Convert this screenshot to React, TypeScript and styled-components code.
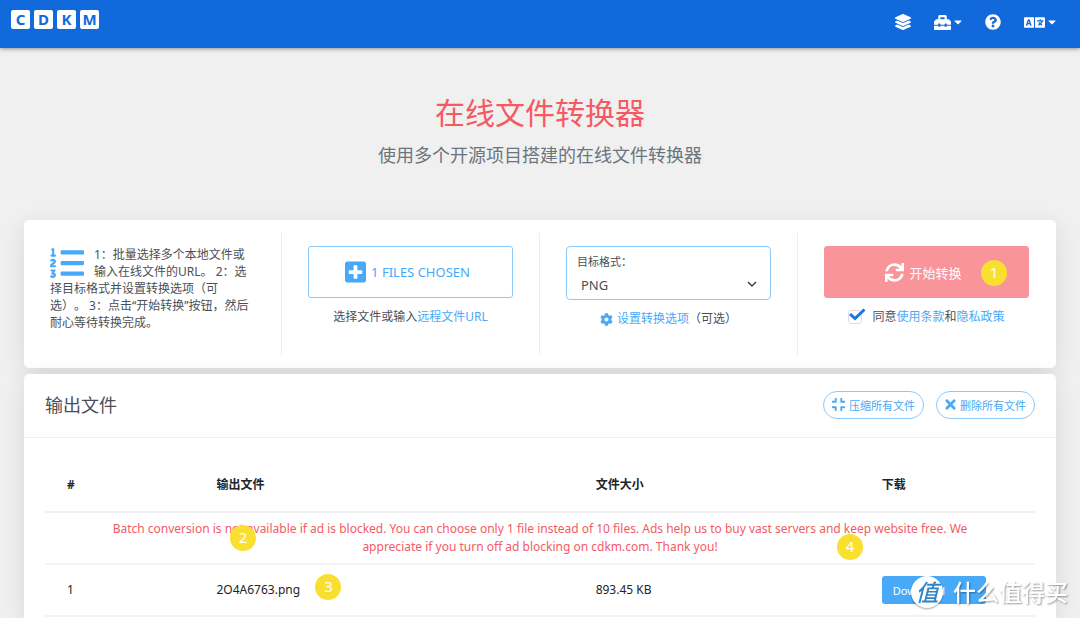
import React from "react";
import styled, { createGlobalStyle } from "styled-components";
import {
  FaCaretDown,
  FaCog,
  FaCompress,
  FaLanguage,
  FaLayerGroup,
  FaListOl,
  FaPlusSquare,
  FaQuestionCircle,
  FaSync,
  FaTimes,
  FaToolbox,
} from "react-icons/fa";

const blue = "#47a9f8";
const red = "#f55a64";

const GlobalStyle = createGlobalStyle`
  *, *::before, *::after { box-sizing: border-box; }
  body {
    margin: 0;
    background: #f0f0f0;
    color: #4a5057;
    font-family: "Noto Sans", "Noto Sans CJK SC", sans-serif;
    font-size: 12px;
    line-height: 18px;
    text-spacing-trim: space-all;
  }
  button, select, input { font-family: inherit; }
`;

const Page = styled.div`
  display: flex;
  flex-direction: column;
  min-height: 100vh;
`;

const TopBar = styled.header`
  display: flex;
  justify-content: space-between;
  align-items: flex-start;
  height: 48px;
  padding: 10px 24px 0 11px;
  background: #1269db;
  box-shadow: 0 1px 4px rgba(0, 0, 0, 0.4);
`;

const Logo = styled.a`
  display: flex;
  gap: 4px;
  text-decoration: none;
`;

const LogoTile = styled.span`
  width: 19px;
  height: 19px;
  border-radius: 2px;
  background: #fff;
  color: #1269db;
  font-size: 15px;
  font-weight: 700;
  line-height: 19px;
  text-align: center;
`;

const Nav = styled.nav`
  display: flex;
  align-items: center;
  gap: 23px;
  height: 24px;
`;

const NavButton = styled.button`
  display: flex;
  align-items: center;
  gap: 3px;
  padding: 0;
  border: 0;
  background: none;
  color: #fff;
`;

const Caret = styled(FaCaretDown)`
  width: 8px;
  height: 12px;
`;

const Hero = styled.section`
  padding: 42px 24px 50px;
  text-align: center;
`;

const Title = styled.h1`
  margin: 0;
  color: ${red};
  font-size: 30px;
  font-weight: 400;
  line-height: 46px;
`;

const Subtitle = styled.p`
  margin: 4px 0 0;
  color: #6c757d;
  font-size: 18px;
  line-height: 30px;
`;

const Main = styled.main`
  display: flex;
  flex: 1;
  flex-direction: column;
  gap: 6px;
  padding: 0 24px;
`;

const Card = styled.section<{ $grow?: boolean }>`
  flex: ${(p) => (p.$grow ? "1 0 auto" : "none")};
  border-radius: ${(p) => (p.$grow ? "5px 5px 0 0" : "5px")};
  background: #fff;
  box-shadow: 0 6px 24px rgba(0, 0, 0, 0.1);
`;

const Steps = styled.div`
  display: grid;
  grid-template-columns: repeat(4, 1fr);
  padding: 13px 0;
`;

const Step = styled.div`
  min-height: 122px;
  padding: 13px 26px 0;
  border-right: 1px solid #eee;
  text-align: center;
  &:last-child { border-right-color: transparent; }
`;

const Instructions = styled.p`
  margin: 0;
  line-height: 17px;
  text-align: left;
  white-space: nowrap;
`;

const ListIcon = styled(FaListOl)`
  float: left;
  width: 34px;
  height: 34px;
  margin-right: 10px;
  color: ${blue};
`;

const BigButton = styled.button<{ $solid?: boolean }>`
  position: relative;
  display: flex;
  align-items: center;
  justify-content: center;
  gap: 5px;
  width: 100%;
  height: 52px;
  padding: 0 6px 0 0;
  border: 1px solid ${(p) => (p.$solid ? "#f8949a" : "#8ccafb")};
  border-radius: 3px;
  background: ${(p) => (p.$solid ? "#f8949a" : "#fff")};
  color: ${(p) => (p.$solid ? "#fff" : blue)};
  font-size: 13px;
`;

const PlusIcon = styled(FaPlusSquare)`
  width: 21px;
  height: 24px;
`;

const Hint = styled.div`
  display: flex;
  align-items: center;
  justify-content: center;
  margin-top: 10px;
`;

const Link = styled.a`
  color: ${blue};
  text-decoration: none;
`;

const CogIcon = styled(FaCog)`
  margin-right: 4px;
  color: ${blue};
`;

const FormatBox = styled.div`
  position: relative;
  height: 54px;
  padding: 5px 10px;
  border: 1px solid #8ccafb;
  border-radius: 4px;
  text-align: left;
`;

const FormatLabel = styled.label`
  display: block;
  font-size: 11px;
  line-height: 20px;
`;

const FormatSelect = styled.select`
  width: 100%;
  height: 26px;
  padding: 0 4px;
  border: 0;
  appearance: none;
  background: transparent;
  color: #4a5057;
  font-size: 13px;
`;

const Chevron = styled.svg`
  position: absolute;
  right: 13px;
  bottom: 11px;
  pointer-events: none;
`;

const CheckWrap = styled.span`
  position: relative;
  display: block;
  width: 14px;
  height: 14px;
  margin-right: 10px;
`;

const CheckInput = styled.input`
  display: block;
  width: 14px;
  height: 14px;
  margin: 0;
  border: 1px solid #dcdfe3;
  border-radius: 3px;
  appearance: none;
  background: #fff;
`;

const CheckMark = styled.svg`
  position: absolute;
  top: -2px;
  left: 1px;
  pointer-events: none;
`;

const OutputHead = styled.div`
  display: flex;
  align-items: center;
  justify-content: space-between;
  height: 64px;
  padding: 0 21px 2px;
  border-bottom: 1px solid #f0f0f2;
`;

const OutputTitle = styled.h2`
  margin: 0;
  font-size: 18px;
  font-weight: 400;
`;

const Actions = styled.div`
  display: flex;
  gap: 12px;
`;

const PillButton = styled.button`
  display: flex;
  align-items: center;
  gap: 4px;
  height: 28px;
  padding: 0 8px;
  border: 1px solid #8ccafb;
  border-radius: 14px;
  background: #fff;
  color: ${blue};
  font-size: 11px;
`;

const CompressIcon = styled(FaCompress)`
  width: 13px;
  height: 15px;
`;

const TimesIcon = styled(FaTimes)`
  width: 11px;
  height: 15px;
`;

const TableWrap = styled.div`
  padding: 21px 21px 0;
`;

const Table = styled.table`
  width: 100%;
  border-collapse: collapse;
  table-layout: fixed;
  color: #212529;
`;

const HeadCell = styled.th<{ $width: string }>`
  width: ${(p) => p.$width};
  height: 53px;
  padding: 0 22px;
  border-bottom: 2px solid #eeeef3;
  font-weight: 700;
  text-align: left;
`;

const Cell = styled.td`
  position: relative;
  height: 52px;
  padding: 0 22px;
  border-bottom: 2px solid #f2f2f7;
`;

const NoticeCell = styled(Cell)`
  padding: 0 60px;
  color: ${red};
  text-align: center;
`;

const DownloadButton = styled.button`
  display: block;
  width: 104px;
  height: 28px;
  padding: 0 11px;
  border: 0;
  border-radius: 3px;
  background: ${blue};
  color: #fff;
  font-size: 11px;
  text-align: left;
`;

const Marker = styled.span<{ $left: string; $top: string }>`
  position: absolute;
  top: ${(p) => p.$top};
  left: ${(p) => p.$left};
  width: 26px;
  height: 26px;
  border-radius: 50%;
  background: #f9df30;
  color: #fff;
  font-size: 15px;
  line-height: 24px;
  text-align: center;
`;

const Watermark = styled.div`
  position: fixed;
  right: 12px;
  bottom: 10px;
  display: flex;
  align-items: center;
  gap: 10px;
  color: #fff;
  font-size: 23px;
  font-weight: 500;
  line-height: 32px;
  text-shadow: 1px 1px 2px rgba(0, 0, 0, 0.4);
  pointer-events: none;
`;

const WatermarkSeal = styled.span`
  width: 32px;
  height: 32px;
  border-radius: 50%;
  background: #fff;
  box-shadow: 0 1px 2px rgba(0, 0, 0, 0.35);
  color: #2f87c8;
  font-style: italic;
  text-align: center;
  text-shadow: none;
`;

export default function App() {
  return (
    <Page>
      <GlobalStyle />
      <TopBar>
        <Logo href="#" aria-label="CDKM">
          {["C", "D", "K", "M"].map((letter) => (
            <LogoTile key={letter}>{letter}</LogoTile>
          ))}
        </Logo>
        <Nav>
          <NavButton aria-label="Formats">
            <FaLayerGroup size={16} />
          </NavButton>
          <NavButton aria-label="Tools">
            <FaToolbox size={17} />
            <Caret />
          </NavButton>
          <NavButton aria-label="Help">
            <FaQuestionCircle size={16} />
          </NavButton>
          <NavButton aria-label="Language">
            <FaLanguage size={21} />
            <Caret />
          </NavButton>
        </Nav>
      </TopBar>

      <Hero>
        <Title>在线文件转换器</Title>
        <Subtitle>使用多个开源项目搭建的在线文件转换器</Subtitle>
      </Hero>

      <Main>
        <Card>
          <Steps>
            <Step>
              <Instructions>
                <ListIcon />
                1：批量选择多个本地文件或
                <br />
                输入在线文件的URL。 2：选
                <br />
                择目标格式并设置转换选项（可
                <br />
                选）。 3：点击“开始转换”按钮，然后
                <br />
                耐心等待转换完成。
              </Instructions>
            </Step>
            <Step>
              <BigButton>
                <PlusIcon />
                1 FILES CHOSEN
              </BigButton>
              <Hint>
                选择文件或输入<Link href="#">远程文件URL</Link>
              </Hint>
            </Step>
            <Step>
              <FormatBox>
                <FormatLabel htmlFor="format">目标格式：</FormatLabel>
                <FormatSelect id="format" defaultValue="PNG">
                  <option>PNG</option>
                </FormatSelect>
                <Chevron width="10" height="7" viewBox="0 0 10 7" fill="none" stroke="#343a40" strokeWidth="1.4">
                  <path d="M1 1l4 4 4-4" />
                </Chevron>
              </FormatBox>
              <Hint>
                <CogIcon size={13} />
                <Link href="#">设置转换选项</Link>（可选）
              </Hint>
            </Step>
            <Step>
              <BigButton $solid>
                <FaSync size={19} />
                开始转换
                <Marker $left="156px" $top="13px">1</Marker>
              </BigButton>
              <Hint>
                <CheckWrap>
                  <CheckInput type="checkbox" id="agree" defaultChecked />
                  <CheckMark width="17" height="13" viewBox="0 0 17 13" fill="none" stroke="#1a73e8" strokeWidth="3">
                    <path d="M1 6l5 4.500L15.500 1.500" />
                  </CheckMark>
                </CheckWrap>
                <label htmlFor="agree">同意</label>
                <Link href="#">使用条款</Link>和<Link href="#">隐私政策</Link>
              </Hint>
            </Step>
          </Steps>
        </Card>

        <Card $grow>
          <OutputHead>
            <OutputTitle>输出文件</OutputTitle>
            <Actions>
              <PillButton>
                <CompressIcon />
                压缩所有文件
              </PillButton>
              <PillButton>
                <TimesIcon />
                删除所有文件
              </PillButton>
            </Actions>
          </OutputHead>
          <TableWrap>
            <Table>
              <thead>
                <tr>
                  <HeadCell $width="15.1%">#</HeadCell>
                  <HeadCell $width="38.3%">输出文件</HeadCell>
                  <HeadCell $width="28.9%">文件大小</HeadCell>
                  <HeadCell $width="17.7%">下载</HeadCell>
                </tr>
              </thead>
              <tbody>
                <tr>
                  <NoticeCell colSpan={4}>
                    Batch conversion is not available if ad is blocked. You can choose only 1 file instead of 10 files.
                    Ads help us to buy vast servers and keep website free. We appreciate if you turn off ad blocking
                    on cdkm.com. Thank you!
                    <Marker $left="185px" $top="12px">2</Marker>
                    <Marker $left="792px" $top="21px">4</Marker>
                  </NoticeCell>
                </tr>
                <tr>
                  <Cell>1</Cell>
                  <Cell>
                    2O4A6763.png
                    <Marker $left="121px" $top="9px">3</Marker>
                  </Cell>
                  <Cell>893.45 KB</Cell>
                  <Cell>
                    <DownloadButton>Download</DownloadButton>
                  </Cell>
                </tr>
              </tbody>
            </Table>
          </TableWrap>
        </Card>
      </Main>

      <Watermark>
        <WatermarkSeal>值</WatermarkSeal>
        什么值得买
      </Watermark>
    </Page>
  );
}
